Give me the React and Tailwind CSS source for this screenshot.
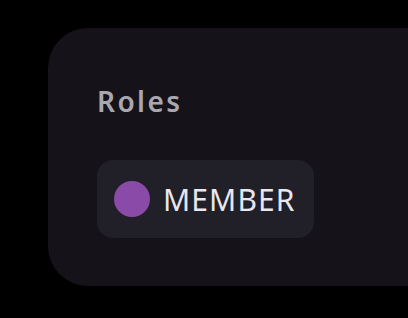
export default function App() {
  return (
    <div className="w-[408px] h-[318px] bg-black overflow-hidden pt-[28px] pl-[48px]" style={{ fontFamily: '"Noto Sans", "Open Sans", sans-serif' }}>
      <div className="w-[420px] h-[258px] bg-[#151319] rounded-[40px] pl-[49px] pt-[53px] flex flex-col items-start">
        <div className="text-[28px] leading-[40px] font-semibold text-[#a9a7af] tracking-[2.4px]">Roles</div>
        <div className="mt-[39px] w-[217px] h-[78px] bg-[#211f27] rounded-[16px] flex items-center pl-[17px] gap-[13px]">
          <div className="w-[36px] h-[36px] rounded-full bg-[#8a4aa8]"></div>
          <span className="text-[30px] text-[#e8e6ee] tracking-[1.1px]">MEMBER</span>
        </div>
      </div>
    </div>
  );
}
